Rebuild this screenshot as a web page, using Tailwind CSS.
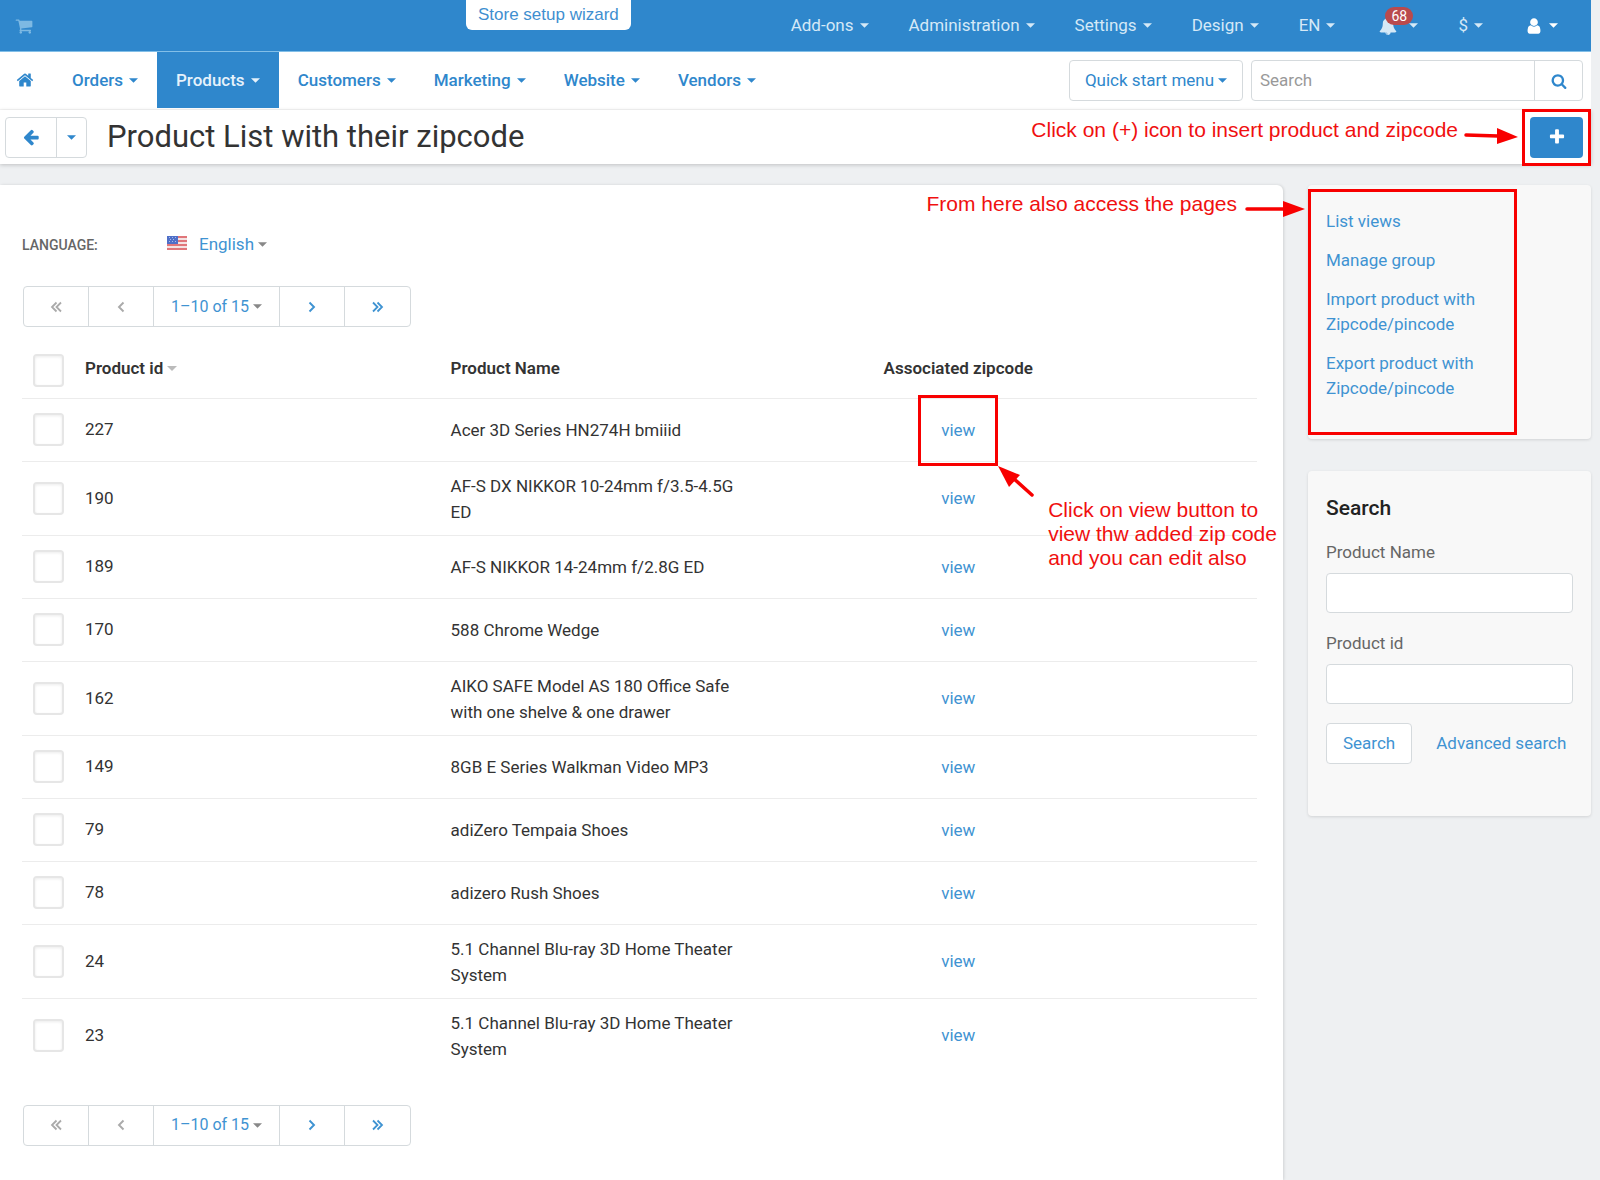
<!DOCTYPE html>
<html lang="en">
<head>
  <meta charset="UTF-8" />
  <meta name="viewport" content="width=device-width, initial-scale=1.0" />
  <title>Product List with their zipcode</title>
  <script src="https://cdn.jsdelivr.net/npm/@tailwindcss/browser@4"></script>
</head>

<body class="bg-[#eef0f2] min-h-screen flex flex-col pr-[9px] overflow-x-hidden font-['Roboto',sans-serif] text-[17px] leading-[25px] text-[#333]">

  <!-- Icon sprite -->
  <svg class="hidden">
    <symbol id="caret" viewBox="0 0 8 4"><path d="M0 0h8L4 4z" fill="currentColor" /></symbol>
    <symbol id="cart" viewBox="0 0 1792 1792"><path fill="currentColor" d="M704 1536q0 52-38 90t-90 38-90-38-38-90 38-90 90-38 90 38 38 90zm896 0q0 52-38 90t-90 38-90-38-38-90 38-90 90-38 90 38 38 90zm128-1088v512q0 24-16.500 42.500t-40.500 21.500l-1044 122q13 60 13 70 0 16-24 64h920q26 0 45 19t19 45-19 45-45 19h-1024q-26 0-45-19t-19-45q0-11 8-31.500t16-36 21.500-40 15.500-29.500l-177-823h-204q-26 0-45-19t-19-45 19-45 45-19h256q16 0 28.500 6.500t19.500 15.500 13 24.500 8 26 5.500 29.500 4.500 26h1201q26 0 45 19t19 45z" /></symbol>
    <symbol id="home" viewBox="0 0 1792 1792"><path fill="currentColor" d="M1472 992v480q0 26-19 45t-45 19h-384v-384h-256v384h-384q-26 0-45-19t-19-45v-480q0-1 .5-3t.5-3l575-474 575 474q1 2 1 6zm223-69l-62 74q-8 9-21 11h-3q-13 0-21-7l-692-577-692 577q-12 8-24 7-13-2-21-11l-62-74q-8-10-7-23.500t11-21.500l719-599q32-26 76-26t76 26l244 204v-195q0-14 9-23t23-9h192q14 0 23 9t9 23v408l219 182q10 8 11 21.500t-7 23.500z" /></symbol>
    <symbol id="magnifier" viewBox="0 0 1792 1792"><path fill="currentColor" d="M1216 832q0-185-131.500-316.500t-316.500-131.500-316.500 131.500-131.500 316.500 131.500 316.500 316.500 131.500 316.500-131.500 131.500-316.500zm512 832q0 52-38 90t-90 38q-54 0-90-38l-343-342q-179 124-399 124-143 0-273.500-55.500t-225-150-150-225-55.500-273.500 55.500-273.500 150-225 225-150 273.500-55.500 273.500 55.500 225 150 150 225 55.500 273.500q0 220-124 399l343 343q37 37 37 90z" /></symbol>
    <symbol id="plus" viewBox="0 0 1792 1792"><path fill="currentColor" d="M1600 736v192q0 40-28 68t-68 28h-416v416q0 40-28 68t-68 28h-192q-40 0-68-28t-28-68v-416h-416q-40 0-68-28t-28-68v-192q0-40 28-68t68-28h416v-416q0-40 28-68t68-28h192q40 0 68 28t28 68v416h416q40 0 68 28t28 68z" /></symbol>
    <symbol id="back" viewBox="0 0 1792 1792"><path fill="currentColor" d="M1664 896v128q0 53-32.500 90.500t-84.500 37.500h-704l293 294q38 36 38 90t-38 90l-75 76q-37 37-90 37-52 0-91-37l-651-652q-37-37-37-90 0-52 37-91l651-650q38-38 91-38 52 0 90 38l75 74q38 38 38 91t-38 91l-293 293h704q52 0 84.500 37.500t32.500 90.500z" /></symbol>
    <symbol id="bell" viewBox="0 0 1792 1792"><path fill="currentColor" d="M912 1696q0-16-16-16-59 0-101.500-42.500t-42.500-101.500q0-16-16-16t-16 16q0 73 51.500 124.500t124.500 51.500q16 0 16-16zm816-288q0 52-38 90t-90 38h-448q0 106-75 181t-181 75-181-75-75-181h-448q-52 0-90-38t-38-90q50-42 91-88t85-119.500 74.500-158.500 50-206 19.500-260q0-152 117-282.500t307-158.500q-8-19-8-39 0-40 28-68t68-28 68 28 28 68q0 20-8 39 190 28 307 158.500t117 282.500q0 139 19.500 260t50 206 74.500 158.500 85 119.500 91 88z" /></symbol>
    <symbol id="user" viewBox="0 0 1792 1792"><path fill="currentColor" d="M1536 1399q0 109-62.500 187t-150.500 78h-854q-88 0-150.500-78t-62.500-187q0-85 8.500-160.500t31.500-152 58.500-131 94-89 134.500-34.500q131 128 313 128t313-128q76 0 134.500 34.500t94 89 58.500 131 31.500 152 8.500 160.500zm-256-887q0 159-112.500 271.500t-271.500 112.500-271.500-112.500-112.500-271.500 112.500-271.500 271.500-112.500 271.500 112.500 112.500 271.500z" /></symbol>
    <symbol id="angle" viewBox="0 0 12 12"><path d="M3.500 1.500 8 6 3.500 10.500" fill="none" stroke="currentColor" stroke-width="1.900" /></symbol>
    <symbol id="double-angle" viewBox="0 0 12 12"><path d="M1 1.500 5.500 6 1 10.500M5.500 1.500 10 6l-4.500 4.500" fill="none" stroke="currentColor" stroke-width="1.800" /></symbol>
  </svg>

  <header class="relative">
    <!-- Top bar -->
    <div class="bg-[#2f87cc] border-b border-[#82bfe8] h-13 flex items-center justify-between pl-[15px] pr-[33px] text-[#d5e9f7]">
      <a href="#" aria-label="Storefront" class="text-[#7db9e3]"><svg class="size-[18px]"><use href="#cart" /></svg></a>
      <nav class="flex items-center gap-10">
        <button class="flex items-center gap-1.5">Add-ons <svg class="w-[9px] h-[5px]"><use href="#caret" /></svg></button>
        <button class="flex items-center gap-1.5">Administration <svg class="w-[9px] h-[5px]"><use href="#caret" /></svg></button>
        <button class="flex items-center gap-1.5">Settings <svg class="w-[9px] h-[5px]"><use href="#caret" /></svg></button>
        <button class="flex items-center gap-1.5">Design <svg class="w-[9px] h-[5px]"><use href="#caret" /></svg></button>
        <button class="flex items-center gap-1.5">EN <svg class="w-[9px] h-[5px]"><use href="#caret" /></svg></button>
        <button class="relative flex items-center gap-3 ml-1" aria-label="Notifications">
          <svg class="size-[18px]"><use href="#bell" /></svg>
          <svg class="w-[9px] h-[5px]"><use href="#caret" /></svg>
          <span class="absolute left-1.5 -top-2.5 bg-[#b94a4d] text-white text-sm leading-[18px] rounded-full px-1.5">68</span>
        </button>
        <button class="flex items-center gap-1.5">$ <svg class="w-[9px] h-[5px]"><use href="#caret" /></svg></button>
        <button class="flex items-center gap-1.5 ml-0.5 text-white" aria-label="Account"><svg class="size-[18px]"><use href="#user" /></svg> <svg class="w-[9px] h-[5px]"><use href="#caret" /></svg></button>
      </nav>
    </div>
    <a href="#" class="absolute top-0 left-[466px] bg-white rounded-b-md px-3 h-[30px] leading-[29px] font-['Liberation_Sans',sans-serif] text-[#3f8fd0]">Store setup wizard</a>

    <!-- Main menu -->
    <div class="bg-white border-b border-[#f7f7f7] flex items-start justify-between pr-2 h-[58px]">
      <nav class="flex h-14 font-medium text-[#2f87cc]">
        <a href="#" aria-label="Home" class="flex items-center pl-4 pr-[19px]"><svg class="size-[18px]"><use href="#home" /></svg></a>
        <button class="flex items-center gap-1.5 px-[19px]">Orders <svg class="w-[9px] h-[5px]"><use href="#caret" /></svg></button>
        <button class="flex items-center gap-1.5 px-[19px] bg-[#2f87cc] text-[#e6f2fb]">Products <svg class="w-[9px] h-[5px]"><use href="#caret" /></svg></button>
        <button class="flex items-center gap-1.5 px-[19px]">Customers <svg class="w-[9px] h-[5px]"><use href="#caret" /></svg></button>
        <button class="flex items-center gap-1.5 px-[19px]">Marketing <svg class="w-[9px] h-[5px]"><use href="#caret" /></svg></button>
        <button class="flex items-center gap-1.5 px-[19px]">Website <svg class="w-[9px] h-[5px]"><use href="#caret" /></svg></button>
        <button class="flex items-center gap-1.5 px-[19px]">Vendors <svg class="w-[9px] h-[5px]"><use href="#caret" /></svg></button>
      </nav>
      <div class="flex gap-2 pt-2 text-[#2f87cc]">
        <button class="flex items-center justify-center gap-1 h-[41px] w-[174px] border border-[#d5dadd] rounded">Quick start menu <svg class="w-[9px] h-[5px]"><use href="#caret" /></svg></button>
        <form class="flex h-[41px] w-[332px] border border-[#d5dadd] rounded">
          <input type="text" aria-label="Search" placeholder="Search" class="flex-1 min-w-0 px-2 placeholder:text-[#999] outline-none" />
          <button type="button" aria-label="Search" class="w-12 border-l border-[#d5dadd] flex items-center justify-center"><svg class="size-4"><use href="#magnifier" /></svg></button>
        </form>
      </div>
    </div>

    <!-- Title bar -->
    <div class="bg-white shadow-[0_1px_4px_rgba(0,0,0,0.2)] h-[54px] flex items-center justify-between pl-[5px] pr-2">
      <div class="flex items-center">
        <div class="flex h-[41px] border border-[#d5dadd] rounded text-[#2f87cc]">
          <button aria-label="Back" class="w-[50px] flex items-center justify-center"><svg class="size-[18px]"><use href="#back" /></svg></button>
          <button aria-label="Recent pages" class="w-[30px] border-l border-[#d5dadd] flex items-center justify-center"><svg class="w-[9px] h-[5px]"><use href="#caret" /></svg></button>
        </div>
        <h1 class="pl-5 text-[31px] leading-10">Product List with their zipcode</h1>
      </div>
      <div class="relative">
        <button aria-label="Add product" class="w-[53px] h-[41px] rounded bg-[#2f87cc] text-white flex items-center justify-center"><svg class="size-[18px]"><use href="#plus" /></svg></button>
        <div class="absolute -inset-2 border-3 border-[#f80000]"></div>
        <div class="absolute right-[65px] -top-px flex items-center gap-1.5 whitespace-nowrap font-['Liberation_Sans',sans-serif] text-[21px] leading-6 text-[#f01010]">
          Click on (+) icon to insert product and zipcode
          <svg class="w-[54px] h-4 mt-3" viewBox="0 0 54 16"><path d="M2 7l32 1" stroke="#f80000" stroke-width="3.500" stroke-linecap="round" /><path d="M33 0v16l21-7z" fill="#f80000" /></svg>
        </div>
      </div>
    </div>
  </header>

  <div class="flex-1 flex gap-[25px] pt-[21px]">
    <!-- Product list -->
    <main class="relative flex-1 bg-white rounded-tr-md shadow-[1px_0_3px_rgba(0,0,0,0.12)] pl-[22px] pr-[26px] pt-[47px]">
      <div class="flex items-center h-[25px]">
        <span class="w-[145px] text-sm font-medium uppercase text-[#666]">Language:</span>
        <svg class="w-5 h-[14px] mr-3 -mt-1" viewBox="0 0 20 14">
          <path fill="#f4e3e3" d="M0 0h20v14H0z" />
          <path fill="#e0767a" d="M0 0h20v2H0zM0 4h20v2H0zM0 8h20v2H0zM0 12h20v2H0z" />
          <path fill="#4f6fc8" d="M0 0h11v8H0z" />
          <path fill="#a9bbe8" d="M2 1h1v1H2zM5 1h1v1H5zM8 1h1v1H8zM3 3h1v1H3zM6 3h1v1H6zM2 5h1v1H2zM5 5h1v1H5zM8 5h1v1H8z" />
        </svg>
        <button class="flex items-center gap-1 text-[#3f93d2]">English <svg class="w-[9px] h-[5px] text-[#888]"><use href="#caret" /></svg></button>
      </div>

      <div class="pagination mt-[29px] ml-px flex w-fit h-[41px] border border-[#d5dadd] rounded divide-x divide-[#d5dadd]"></div>

      <table class="table-fixed w-full mt-3 text-left">
        <thead>
          <tr class="h-[59px] border-b border-[#ececec]">
            <th class="w-13 pl-[11px] pt-1"><input type="checkbox" aria-label="Select all products" class="block appearance-none w-[31px] h-[33px] border-2 border-[#e6e6e6] rounded shadow-[inset_0_1px_3px_rgba(0,0,0,0.08)]" /></th>
            <th class="w-[29.600%] px-[11px] font-semibold"><a href="#" class="flex items-center gap-1">Product id <svg class="w-[10px] h-[5px] text-[#bbb]"><use href="#caret" /></svg></a></th>
            <th class="w-[25%] px-[11px] font-semibold">Product Name</th>
            <th class="w-[34%] text-center font-semibold">Associated zipcode</th>
            <th></th>
          </tr>
        </thead>
        <tbody id="product-rows"></tbody>
      </table>

      <div class="pagination mt-[33px] ml-px flex w-fit h-[41px] border border-[#d5dadd] rounded divide-x divide-[#d5dadd]"></div>

      <!-- Note pointing at the side menu -->
      <div class="absolute -right-[22px] top-1 flex items-center gap-2 whitespace-nowrap font-['Liberation_Sans',sans-serif] text-[21px] leading-[30px] text-[#f01010]">
        From here also access the pages
        <svg class="w-[60px] h-4 mt-2.5" viewBox="0 0 60 16"><path d="M2 8h38" stroke="#f80000" stroke-width="3.500" stroke-linecap="round" /><path d="M38 0v16l22-8z" fill="#f80000" /></svg>
      </div>
    </main>

    <!-- Sidebar -->
    <aside class="w-[283px] flex flex-col gap-8 text-[#3f93d2]">
      <nav class="relative bg-[#f8f8f8] rounded shadow-[0_1px_3px_rgba(0,0,0,0.12)] pl-[18px] pt-6 pb-[38px]">
        <ul class="w-[170px] space-y-[14px]">
          <li><a href="#">List views</a></li>
          <li><a href="#">Manage group</a></li>
          <li><a href="#">Import product with Zipcode/pincode</a></li>
          <li><a href="#">Export product with Zipcode/pincode</a></li>
        </ul>
        <div class="absolute left-0 top-1 bottom-1 w-[209px] border-3 border-[#f80000]"></div>
      </nav>

      <section class="bg-[#f8f8f8] rounded shadow-[0_1px_3px_rgba(0,0,0,0.12)] px-[18px] pt-6 pb-[52px]">
        <h2 class="text-[21px] leading-[27px] font-medium text-[#222]">Search</h2>
        <form>
          <label for="name-filter" class="block mt-[18px] text-[#666]">Product Name</label>
          <input id="name-filter" type="text" class="block w-full h-10 mt-2 px-2 bg-white border border-[#d5dadd] rounded" />
          <label for="id-filter" class="block mt-[18px] text-[#666]">Product id</label>
          <input id="id-filter" type="text" class="block w-full h-10 mt-2 px-2 bg-white border border-[#d5dadd] rounded" />
          <div class="flex items-center gap-6 mt-[19px]">
            <button type="button" class="h-[41px] px-4 bg-white border border-[#d5dadd] rounded">Search</button>
            <a href="#">Advanced search</a>
          </div>
        </form>
      </section>
    </aside>
  </div>

  <script>
    const products = [
      [227, 'Acer 3D Series HN274H bmiiid'],
      [190, 'AF-S DX NIKKOR 10-24mm f/3.5-4.5G ED'],
      [189, 'AF-S NIKKOR 14-24mm f/2.8G ED'],
      [170, '588 Chrome Wedge'],
      [162, 'AIKO SAFE Model AS 180 Office Safe with one shelve &amp; one drawer'],
      [149, '8GB E Series Walkman Video MP3'],
      [79, 'adiZero Tempaia Shoes'],
      [78, 'adizero Rush Shoes'],
      [24, '5.1 Channel Blu-ray 3D Home Theater System'],
      [23, '5.1 Channel Blu-ray 3D Home Theater System']
    ];

    // The first "view" link carries the highlight box and its note
    const viewNote = `
      <span class="absolute -inset-x-[23px] -top-[22px] -bottom-[23px] border-3 border-[#f80000]"></span>
      <span class="absolute left-[57px] top-[49px] flex whitespace-nowrap text-left font-['Liberation_Sans',sans-serif] text-[21px] leading-6 text-[#f01010]">
        <svg class="w-[38px] h-8 mr-3" viewBox="0 0 38 32"><path d="M15 12l19 17" stroke="#f80000" stroke-width="3.500" stroke-linecap="round" /><path d="M0 0l22 9-11 12z" fill="#f80000" /></svg>
        <span class="pt-8">Click on view button to<br>view thw added zip code<br>and you can edit also</span>
      </span>`;

    document.getElementById('product-rows').innerHTML = products.map(([id, name], i) => `
      <tr class="h-[63px] border-b border-[#ececec] last:border-0">
        <td class="pl-[11px]"><input type="checkbox" aria-label="Select product ${id}" class="block appearance-none w-[31px] h-[33px] border-2 border-[#e6e6e6] rounded shadow-[inset_0_1px_3px_rgba(0,0,0,0.08)]" /></td>
        <td class="px-[11px]">${id}</td>
        <td class="px-[11px] pt-[11px] pb-2.5 leading-[26px]">${name}</td>
        <td class="text-center"><span class="relative inline-block leading-[26px]"><a href="#" class="text-[#3f93d2]">view</a>${i === 0 ? viewNote : ''}</span></td>
        <td></td>
      </tr>
    `).join('');

    document.querySelectorAll('.pagination').forEach(bar => {
      bar.innerHTML = `
        <button aria-label="First page" class="w-[65px] flex items-center justify-center text-[#aaa]"><svg class="size-3 rotate-180"><use href="#double-angle" /></svg></button>
        <button aria-label="Previous page" class="w-[65px] flex items-center justify-center text-[#aaa]"><svg class="size-3 rotate-180"><use href="#angle" /></svg></button>
        <button class="w-[126px] flex items-center justify-center gap-1 text-base text-[#3f93d2]">1–10 of 15 <svg class="w-[9px] h-[5px] text-[#888]"><use href="#caret" /></svg></button>
        <button aria-label="Next page" class="w-[65px] flex items-center justify-center text-[#3f93d2]"><svg class="size-3"><use href="#angle" /></svg></button>
        <button aria-label="Last page" class="w-[65px] flex items-center justify-center text-[#3f93d2]"><svg class="size-3"><use href="#double-angle" /></svg></button>
      `;
    });
  </script>
</body>
</html>
